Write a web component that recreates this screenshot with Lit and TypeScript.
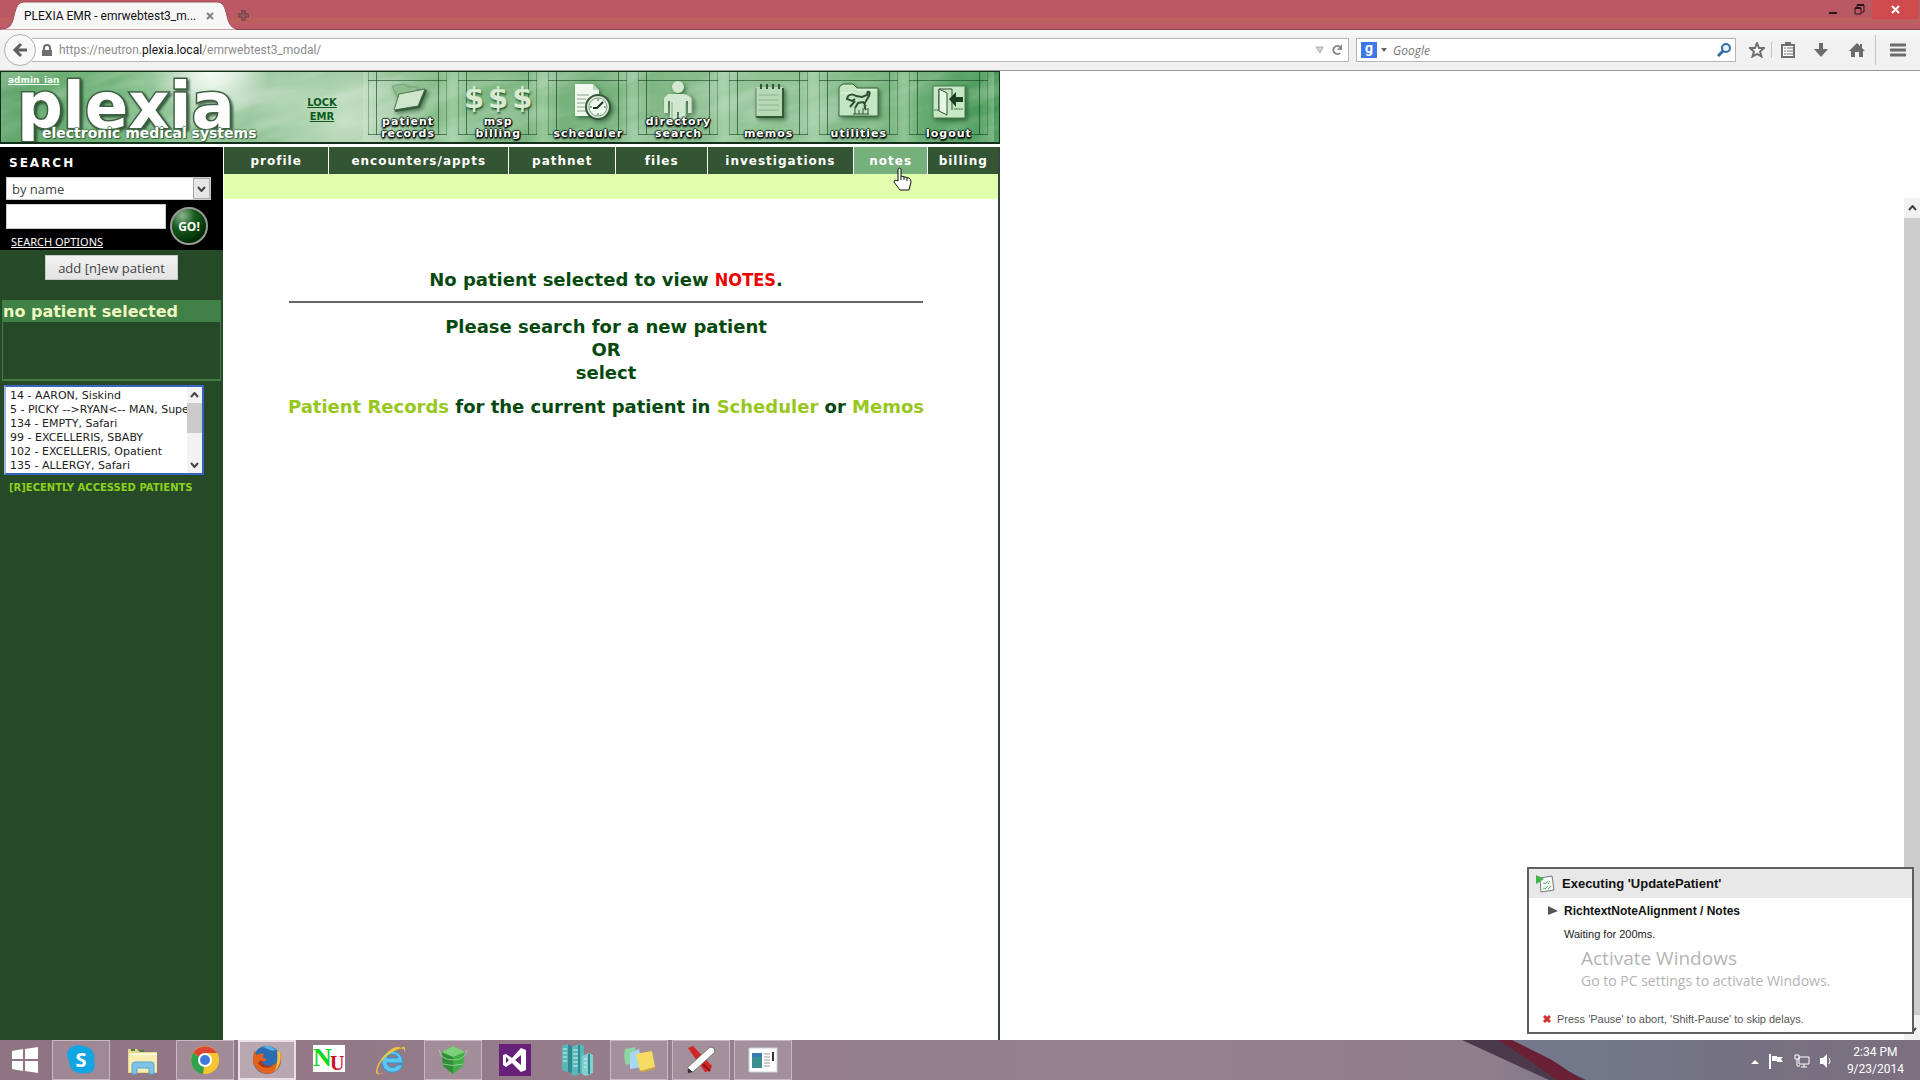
import { LitElement, html, css, svg } from "lit";
import { customElement } from "lit/decorators.js";
import { classMap } from "lit/directives/class-map.js";

const NAV = [
  { label: "profile", grow: 105 },
  { label: "encounters/appts", grow: 180 },
  { label: "pathnet", grow: 107 },
  { label: "files", grow: 91 },
  { label: "investigations", grow: 146 },
  { label: "notes", grow: 74 },
  { label: "billing", grow: 70 },
];

const PATIENTS = [
  "14 - AARON, Siskind",
  "5 - PICKY -->RYAN<-- MAN, Super",
  "134 - EMPTY, Safari",
  "99 - EXCELLERIS, SBABY",
  "102 - EXCELLERIS, Opatient",
  "135 - ALLERGY, Safari",
];

const TOOLS = [
  {
    lines: ["patient", "records"],
    icon: svg`<path d="M8 6l12-2 3 3h10v10H14z" fill="#8fbf8f" stroke="#79a87b"/><path d="M15 14l26-5-7 17-24 4z" fill="#cfe6cd" stroke="#4c7350"/><path d="M11 31l24-4 7-17" fill="none" stroke="#335c38" stroke-width="2"/>`,
  },
  { lines: ["msp", "billing"], dollars: true, icon: svg`` },
  {
    lines: ["scheduler"],
    icon: svg`<path d="M11 4h18l6 6v26H11z" fill="#f1f8f0"/><path d="M29 4v6h6" fill="#bcd6bb"/><path d="M13 15h12M13 19h9M13 23h8M13 27h8M13 31h10" stroke="#8aa58b"/><circle cx="34" cy="27" r="12" fill="#d9ead8" stroke="#36563a" stroke-width="2"/><circle cx="34" cy="27" r="9" fill="#eff7ee" stroke="#7d9c7f"/><path d="M34 19v2M34 33v2M26 27h2M40 27h2" stroke="#36563a"/><path d="M39 22l-6 6h-4" stroke="#1d3320" stroke-width="2" fill="none"/>`,
  },
  {
    lines: ["directory", "search"],
    icon: svg`<circle cx="24" cy="7" r="6" fill="#d3e8d1"/><path d="M14 14h20l4 4v15h-4V21h-2v23h-7V32h-2v12h-7V21h-2v12h-4V18z" fill="#d3e8d1"/><path d="M31 14l3 1 4 3v15M32 22v21M18 22v19" stroke="#7fa781" fill="none"/>`,
  },
  {
    lines: ["memos"],
    icon: svg`<path d="M11 7h27v30H11z" fill="#b7dab5"/><path d="M11 37h27V8" stroke="#2f5a35" stroke-width="2" fill="none"/><path d="M11 37V8" stroke="#5c8a60"/><path d="M14 15h20M14 20h20M14 25h20M14 30h20" stroke="#8db58d"/><path d="M16 4v5M22 4v5M28 4v5M34 4v5" stroke="#315837" stroke-width="2"/>`,
  },
  {
    lines: ["utilities"],
    icon: svg`<path d="M4 36V7l4-3h10l4 4h21v28z" fill="#c5e6c2" stroke="#36653c"/><path d="M6 13h14M22 10h20" stroke="#e6f6e4"/><path d="M13 16q4-3 8 0l6 1 5-2 1-4M13 16l-1 3 5 2 3-2M20 21l-5 6M32 12q4-1 2 4l-3 5q-3 4 0 9M20 28l3-5 5-1 3 4" stroke="#2c5132" stroke-width="2" fill="none"/><path d="M20 28v6M24 30v4M28 28v6M33 28v6M18 34h16" stroke="#2c5132"/>`,
  },
  {
    lines: ["logout"],
    icon: svg`<path d="M8 6h32v32H8z" fill="#c8e8c5" stroke="#477a4c"/><path d="M9 30h6M29 29h9" stroke="#477a4c"/><path d="M14 31V9h13v21" stroke="#2c5132" fill="none"/><path d="M14 9l8 4v22l-8-4z" fill="#e6f6e4" stroke="#2c5132"/><path d="M24 19l7-7v5h7v5h-7v5z" fill="#1f3f25"/>`,
  },
];

const TASKS = [
  {
    name: "Skype", open: true,
    icon: svg`<path d="M9 2c5-2 7 0 9 0 9 1 13 8 11 15 3 7-2 14-9 12C12 31 4 26 4 17 0 10 2 4 9 2z" fill="#12a5e3"/><text x="16" y="23" text-anchor="middle" font-family="Open Sans" font-weight="700" font-size="20" fill="#fff">S</text>`,
  },
  {
    name: "File Explorer",
    icon: svg`<path d="M1 5h9l2 3h18v21H1z" fill="#ead788"/><path d="M2 9h28v19H2z" fill="#f8eeb4"/><path d="M2 9h28v2H2z" fill="#fdf8d8"/><path d="M5 30v-9q0-3 3-3h16q3 0 3 3v9h-5v-6H10v6z" fill="#7fc3e6" stroke="#5aa3cc"/><path d="M4 6h4M13 7h4" stroke="#3f7d4a" stroke-width="2"/>`,
  },
  {
    name: "Chrome", open: true,
    icon: svg`<circle cx="16" cy="16" r="14" fill="#f4c630"/><path d="M16 16L4 9A14 14 0 0 1 28.100 9z" fill="#dd4434"/><path d="M16 16L4 9a14 14 0 0 0 10 21z" fill="#2fa24e"/><path d="M16 9h12a14 14 0 0 1-12 21l6-11z" fill="#f4c630"/><circle cx="16" cy="16" r="7" fill="#fff"/><circle cx="16" cy="16" r="5" fill="#3f79d8"/>`,
  },
  {
    name: "Firefox", active: true,
    icon: svg`<circle cx="16" cy="16" r="14" fill="#2b6cb4"/><path d="M12 3q6-3 13 3-4 1-6 0z" fill="#52b4e4"/><path d="M4 6c-3 6-3 13 1 18s12 8 18 4 9-12 6-20c0 8-4 13-10 14s-9-2-9-5c3 1 5 0 6-2-4 0-5-3-3-5-4-1-6 0-7 1-2-1-2-3-2-5z" fill="#e2631c"/><path d="M29 8c2 8-1 16-6 20 3-5 4-12 3-21z" fill="#f7c33c"/><path d="M10 16c2 6 8 7 12 5-3 4-11 4-15-2z" fill="#a9341a"/>`,
  },
  {
    name: "NU",
    icon: svg`<path d="M0 1h32v27H0z" fill="#fff"/><text x="0" y="22" font-family="Liberation Serif" font-weight="700" font-size="26" fill="#10d820">N</text><text x="17" y="26" font-family="Liberation Serif" font-weight="700" font-size="20" fill="#d01020">U</text>`,
  },
  {
    name: "Internet Explorer",
    icon: svg`<path d="M28 19H12c1 5 8 6 10 2h6c-3 9-19 11-21-2C5 5 27 2 28 19zM12 14h11c-1-5-10-5-11 0z" fill="#5cc5f0" stroke="#2f93cc"/><path d="M26 4c4-3 5 0 3 5 2-8-8-4-16 2S1 26 3 29c1 2 5 0 8-2-8 6-12 4-9-4S18-1 26 4z" fill="#f3c63a"/>`,
  },
  {
    name: "Green Cube", open: true,
    icon: svg`<path d="M5 8L16 2l12 6-2 14-10 8-10-8z" fill="#3fae45"/><path d="M5 8l11 5v17L6 22z" fill="#2f8f38"/><path d="M16 2l12 6-12 5L5 8z" fill="#7fd07a"/><path d="M2 6q2 10 14 10T30 6M6 20q10 3 20 0" stroke="#b9d8bb" stroke-opacity=".7" fill="none"/>`,
  },
  {
    name: "Visual Studio",
    icon: svg`<path d="M0 0h32v32H0z" fill="#68217a"/><path d="M4 11l3-1 6 4 9-10 5 2v20l-5 2-9-9-6 4-3-2zM7 13v6l3-3zM22 11l-6 5 6 5z" fill="#fff" fill-rule="evenodd"/>`,
  },
  {
    name: "Servers",
    icon: svg`<path d="M1 2l6-2v28l-6-2zM10 3l8-3 5 2v26l-9 4-4-2z" fill="#57b7b9"/><path d="M7 0l4 2v27l-4-1z" fill="#2f8a90"/><path d="M21 12l7-3 4 2v18l-7 3-4-2z" fill="#7fd0cf"/><path d="M2 5h4M2 9h4M2 13h4M2 17h4M12 6h5M12 10h5M12 14h5M12 18h5M12 22h5M23 15h3M23 19h3M23 23h3" stroke="#d5f3f1"/><path d="M18 1v28M28 10v20" stroke="#2f8a90" stroke-width="2"/>`,
  },
  {
    name: "Sticky Notes", open: true,
    icon: svg`<path d="M2 5l10-2 3 15-12 3q-3-8-1-16z" fill="#8ed6a0"/><path d="M7 9l9-4 4 18-13 2z" fill="#a9d6f2"/><path d="M13 10l16-3 3 16-15 4z" fill="#f6dc62"/><path d="M17 27l15-4-1 2-11 3z" fill="#d0ab36"/>`,
  },
  {
    name: "Test Tool", open: true,
    icon: svg`<path d="M3 4l5-2 19 20-2 5-5 1z" fill="#d32525"/><path d="M25 3l4 1 1 4L8 28l-5 1-1-5z" fill="#fff" stroke="#777"/><path d="M3 24l5 4-5 1z" fill="#333"/><path d="M18 20l7 7" stroke="#8d1414" stroke-width="2"/>`,
  },
  {
    name: "Window", open: true,
    icon: svg`<path d="M2 4h28v24H2z" fill="#fff" stroke="#c9d5da"/><path d="M5 9h10v15H5z" fill="#3c8f8f"/><path d="M5 9h10v4H5z" fill="#3d79b5"/><path d="M17 10h6M17 13h6M17 16h6M17 19h6M17 22h6" stroke="#999"/><path d="M26 8v9" stroke="#333" stroke-width="2"/>`,
  },
];

@customElement("browser-chrome")
export class BrowserChrome extends LitElement {
  static styles = css`
    :host { display: block; font-family: Roboto, "Open Sans", sans-serif; }
    * { box-sizing: border-box; }
    button { border: 0; padding: 0; margin: 0; background: none; font: inherit; display: grid; place-items: center; }
    .title { display: flex; align-items: flex-start; height: 30px; background: linear-gradient(#ba5964 0, #ba5964 17px, #c25e5e 18px, #b9625f 22px, #c15a68 24px); border-bottom: 1px solid #85444b; }
    .tabbox { position: relative; width: 236px; height: 30px; display: flex; align-items: center; padding: 2px 21px 0 24px; }
    .tabbg { position: absolute; left: 0; top: 0; width: 100%; height: 30px; }
    .tabname { position: relative; flex: 1; font-size: 12px; line-height: 16px; color: #111; white-space: nowrap; }
    .close { position: relative; width: 10px; height: 10px; }
    .plus { width: 14px; height: 30px; }
    .fill { flex: 1; }
    .win { display: flex; padding-right: 2px; }
    .win button { width: 26px; height: 19px; }
    .win .x { width: 46px; background: #cf4a4d; }
    .bar { display: flex; align-items: center; height: 41px; background: linear-gradient(#fafafa, #f1f1f1 10px); border-bottom: 1px solid #999; padding-left: 4px; }
    .back { width: 32px; height: 32px; border-radius: 16px; border: 1px solid #b0b0b0; background: #f8f8f8; z-index: 1; }
    .field { display: flex; align-items: center; height: 24px; background: #fff; border: 1px solid #b5b5b5; color: #8b8b8b; font-size: 12px; }
    .url { flex: 1; margin-left: -4px; padding: 0 5px 0 10px; gap: 7px; border-left: 0; }
    .url b { font-weight: 400; color: #111; }
    .search { width: 380px; margin: 0 11px 0 7px; padding: 0 4px; gap: 4px; }
    .search input { flex: 1; min-width: 0; border: 0; outline: 0; font: italic 12px "Open Sans", sans-serif; background: none; }
    .search input::placeholder { color: #777; opacity: 1; }
    .g { width: 16px; height: 16px; background: #3d78e8; color: #fff; font-size: 14px; line-height: 13px; font-weight: 700; text-align: center; }
    .tools { display: flex; align-items: center; }
    .tools button { width: 36px; height: 24px; }
    .tools button:first-child { width: 20px; margin-right: 4px; }
    .tools .tight { width: 31px; }
    .sep { width: 1px; height: 30px; background: #c4c4c4; }
    .sep.small { height: 16px; }
    .tools .menu { width: 44px; }
    svg { display: block; }
  `;
  render() {
    return html`
      <div class="title">
        <div class="tabbox">
          <svg class="tabbg" viewBox="0 0 236 30" preserveAspectRatio="none" aria-hidden="true"><path d="M0 30v-1c10 0 12-4 14-13S18 2 24 2h193c6 0 8 5 10 14s5 13 12 13v1z" fill="#f7f7f7" stroke="#a34e57"/></svg>
          <span class="tabname">PLEXIA EMR - emrwebtest3_m...</span>
          <button class="close" aria-label="Close tab"><svg width="8" height="8" viewBox="0 0 8 8"><path d="M1 1l6 6M7 1L1 7" stroke="#808080" stroke-width="2"/></svg></button>
        </div>
        <button class="plus" aria-label="New tab"><svg width="11" height="11" viewBox="0 0 11 11"><path d="M4 0h3v4h4v3H7v4H4V7H0V4h4z" fill="#8f5a60" stroke="#6f3b40"/></svg></button>
        <div class="fill"></div>
        <div class="win">
          <button aria-label="Minimize"><svg width="10" height="10" viewBox="0 0 10 10"><path d="M1 8h8" stroke="#2a1517" stroke-width="2"/></svg></button>
          <button aria-label="Restore"><svg width="11" height="11" viewBox="0 0 11 11"><path d="M3 3V1h7v7H8M1 4h6v6H1z" fill="none" stroke="#2a1517"/><path d="M3 1h7M1 4h6" stroke="#2a1517" stroke-width="2"/></svg></button>
          <button class="x" aria-label="Close"><svg width="9" height="9" viewBox="0 0 9 9"><path d="M1 1l7 7M8 1L1 8" stroke="#fff" stroke-width="2"/></svg></button>
        </div>
      </div>
      <div class="bar">
        <button class="back" aria-label="Back"><svg width="16" height="16" viewBox="0 0 16 16"><path d="M15 8H4M9 2L3 8l6 6" fill="none" stroke="#606060" stroke-width="3"/></svg></button>
        <div class="field url">
          <svg width="10" height="13" viewBox="0 0 10 13"><path d="M2 6V4a3 3 0 0 1 6 0v2" fill="none" stroke="#6f6f6f" stroke-width="2"/><path d="M0 6h10v6H0z" fill="#6f6f6f"/></svg>
          <span>https://neutron.<b>plexia.local</b>/emrwebtest3_modal/</span>
          <span class="fill"></span>
          <svg width="9" height="8" viewBox="0 0 9 8"><path d="M1 1h7L5 7z" fill="#d5d5d5" stroke="#aaa"/></svg>
          <button aria-label="Reload"><svg width="12" height="12" viewBox="0 0 12 12"><path d="M9 9a4 4 0 1 1 0-6" fill="none" stroke="#8a8a8a" stroke-width="2"/><path d="M11 0v6H6z" fill="#8a8a8a"/></svg></button>
        </div>
        <div class="field search">
          <span class="g">g</span>
          <svg width="6" height="4" viewBox="0 0 6 4"><path d="M0 0h6L3 4z" fill="#666"/></svg>
          <input aria-label="Search with Google" placeholder="Google" />
          <button aria-label="Search"><svg width="14" height="14" viewBox="0 0 14 14"><circle cx="9" cy="5" r="4" fill="#e9f3fb" stroke="#316ca5" stroke-width="2"/><path d="M6 8l-5 5" stroke="#316ca5" stroke-width="3"/></svg></button>
        </div>
        <div class="tools">
          <button aria-label="Bookmark"><svg width="16" height="16" viewBox="0 0 16 16"><path d="M8 1l2 5h5l-4 3.500 1.500 5L8 12l-4.500 2.500L5 9.500 1 6h5z" fill="#fff" stroke="#6f6f6f" stroke-width="2"/></svg></button>
          <span class="sep small"></span>
          <button class="tight" aria-label="Bookmarks list"><svg width="14" height="16" viewBox="0 0 14 16"><path d="M1 3h12v12H1z" fill="#fff" stroke="#6f6f6f" stroke-width="2"/><path d="M4 0h6v3H4z" fill="#6f6f6f"/><path d="M3 6h2M3 9h2M3 12h2M6 6h6M6 9h6M6 12h6" stroke="#6f6f6f"/></svg></button>
          <button aria-label="Downloads"><svg width="14" height="14" viewBox="0 0 14 14"><path d="M5 0h4v6h5l-7 8-7-8h5z" fill="#6b6b6b"/></svg></button>
          <button aria-label="Home"><svg width="16" height="14" viewBox="0 0 16 14"><path d="M8 0l3 3V1h2v4l3 3h-2v6h-4V9H6v5H2V8H0z" fill="#6b6b6b"/></svg></button>
          <span class="sep"></span>
          <button class="menu" aria-label="Menu"><svg width="16" height="14" viewBox="0 0 16 14"><path d="M1 2h14M1 7h14M1 12h14" stroke="#6b6b6b" stroke-width="3" stroke-linecap="round"/></svg></button>
        </div>
      </div>`;
  }
}

@customElement("plexia-banner")
export class PlexiaBanner extends LitElement {
  static styles = css`
    :host { display: block; font-family: "DejaVu Sans", Verdana, sans-serif; }
    * { box-sizing: border-box; }
    .banner { position: relative; display: flex; height: 73px; border: 1px solid #12301a; border-bottom-width: 2px; overflow: hidden;
      background:
        radial-gradient(ellipse 60px 45px at 21% 0, rgba(255,255,255,.9), rgba(255,255,255,0)),
        radial-gradient(ellipse 110px 80px at 22% 20%, rgba(226,244,226,.6), rgba(226,244,226,0)),
        radial-gradient(ellipse 90px 80px at 34% 70%, rgba(215,236,213,.7), rgba(205,230,203,0)),
        linear-gradient(90deg, #62a56b 0, #74b57c 12%, #7db582 25%, #98c49a 36%, #82ba86 45%, #74b07a 60%, #94c497 75%, #7db883 88%, #3f9450 100%); }
    .marble { position: absolute; left: 0; top: 0; width: 100%; height: 100%; opacity: .2; }
    .brand { position: relative; width: 280px; }
    .user { position: absolute; left: 7px; top: 3px; font-size: 9px; line-height: 11px; font-weight: 700; color: #f3fff2; }
    .word { position: absolute; left: 16px; top: 6px; font-size: 64px; line-height: 56px; font-weight: 700; color: #fff; -webkit-text-stroke: 3px #3f5f44; paint-order: stroke fill; filter: drop-shadow(2px 2px 1px rgba(20,50,26,.7)); }
    .tagline { position: absolute; left: 41px; top: 53px; font-size: 14px; line-height: 16px; font-weight: 700; color: #fff; white-space: nowrap; text-shadow: 1px 1px 1px #2f5a36, -1px 0 1px #5c8a60, 1px 0 1px #5c8a60, 0 -1px 1px #5c8a60; }
    .lock { position: relative; width: 82px; padding-top: 24px; text-align: center; font-size: 10px; line-height: 14px; font-weight: 700; }
    .lock a { color: #0c5a1c; }
    .tools { position: relative; flex: 1; display: grid; grid-template-columns: repeat(7, 1fr); padding-right: 5px; }
    .tool { position: relative; display: flex; flex-direction: column; align-items: center; justify-content: flex-end; padding: 0 0 2px; text-decoration: none; color: #fff;
      background: linear-gradient(90deg, rgba(215,240,214,.3) 0, transparent 18px, transparent 74px, rgba(215,240,214,.3)); }
    .frame { position: absolute; left: 5px; right: 6px; top: 0; bottom: 7px; border: solid rgba(24,72,34,.35); border-width: 0 1px; }
    .frame.in { left: 13px; right: 14px; border-color: rgba(14,52,22,.6); }
    .frame.row { top: 8px; border-width: 1px 0; border-color: rgba(14,52,22,.55); }
    .pic { position: absolute; left: 50%; top: 8px; margin-left: -24px; filter: drop-shadow(2px 2px 2px rgba(20,60,28,.6)); }
    .money { position: absolute; left: 0; right: 0; top: 8px; text-align: center; font-size: 29px; line-height: 36px; letter-spacing: 4px; padding-left: 4px; font-weight: 700; color: #d8ebd0; text-shadow: 1px 2px 2px #2d6237; }
    .label { position: relative; font-size: 11px; line-height: 12px; font-weight: 700; letter-spacing: 1px; text-align: center;
      text-shadow: 1px 1px 1px #000, -1px 0 1px #12301a, 0 -1px 1px #12301a, 1px 0 1px #000, 0 2px 2px #000; }
    .label span { display: block; }
  `;
  render() {
    return html`<header class="banner">
      <svg class="marble" aria-hidden="true"><filter id="m"><feTurbulence type="fractalNoise" baseFrequency="0.012 0.05" numOctaves="3" seed="4"/><feColorMatrix values="0 0 0 0 1  0 0 0 0 1  0 0 0 0 1  3 0 0 0 -1.200"/></filter><rect width="1400" height="400" y="-20" filter="url(#m)" transform="rotate(-14)"/></svg>
      <div class="brand">
        <span class="word">plexia</span>
        <span class="tagline">electronic medical systems</span>
        <a class="user" href="#">admin_ian</a>
      </div>
      <div class="lock"><a href="#">LOCK<br />EMR</a></div>
      <nav class="tools">
        ${TOOLS.map((t) => html`<a class="tool" href="#">
          <i class="frame"></i><i class="frame in"></i><i class="frame row"></i>
          ${t.dollars ? html`<span class="money">$$$</span>` : html`<svg class="pic" width="48" height="46" viewBox="0 0 48 46" aria-hidden="true">${t.icon}</svg>`}
          <span class="label">${t.lines.map((l) => html`<span>${l}</span>`)}</span>
        </a>`)}
      </nav>
    </header>`;
  }
}

@customElement("search-panel")
export class SearchPanel extends LitElement {
  static styles = css`
    :host { display: block; background: #264a27; font-family: "DejaVu Sans", Verdana, sans-serif; }
    * { box-sizing: border-box; }
    .search { background: #000; height: 103px; padding: 9px 6px 0; color: #fff; display: grid; grid-template-columns: 160px 40px; column-gap: 4px; align-content: start; }
    h2 { margin: 0 0 6px 3px; font-size: 12px; line-height: 15px; letter-spacing: 2px; grid-column: 1 / 3; }
    .pick { position: relative; grid-column: 1 / 3; width: 205px; height: 23px; margin-bottom: 4px; }
    .pick select { appearance: none; width: 100%; height: 100%; border: 1px solid #ccc; border-radius: 0; background: #fff; padding: 0 5px; margin: 0; color: #444; font: 13px "Open Sans", sans-serif; }
    .drop { position: absolute; right: 1px; top: 1px; width: 17px; height: 21px; background: #e6e6e6; border: 1px solid #aaa; display: grid; place-items: center; pointer-events: none; }
    .q { width: 160px; height: 25px; border: 1px solid #ccc; padding: 0 4px; background: #fff; }
    .go { grid-row: 3 / 5; grid-column: 2; width: 38px; height: 38px; margin-top: 3px; border: 2px solid #9a9a9a; border-radius: 19px; padding: 0; color: #fff; font: 700 12px "Open Sans", sans-serif; background: radial-gradient(circle at 30% 20%, #8fb58f 0, #175c1d 35%, #022c06 75%); }
    .opt { align-self: start; margin: 5px 0 0 5px; color: #fff; font: 11px/16px "Noto Sans", sans-serif; }
    .add { display: block; margin: 5px 0 20px 45px; width: 133px; height: 25px; border: 1px solid #c9c9c9; border-radius: 0; background: linear-gradient(#f2f2f2, #e3e3e3); color: #444; font: 13px "Open Sans", sans-serif; padding: 0; }
    .patient { margin: 0 2px 4px; height: 81px; border: 1px solid #407e47; border-bottom-width: 2px; }
    .patient h3 { margin: 0; background: #3f8146; color: #f1f7c0; font-size: 16px; line-height: 21px; white-space: nowrap; }
    .list { position: relative; margin-left: 4px; width: 200px; height: 90px; display: flex; border: 2px solid #2f5fb4; border-color: #3565c0 #3565c0 #3565c0 #9bb4e0; background: #fff; }
    .list select { flex: 1; min-width: 0; border: 0; outline: 0; margin: 0; padding: 2px 0 0 2px; overflow: hidden; background: #fff; font: 11px "DejaVu Sans", sans-serif; color: #222; scrollbar-width: none; }
    .list option { height: 14px; min-height: 14px; line-height: 14px; padding: 0 0 0 2px; font-size: 11px; overflow: hidden; }
    .sb { width: 15px; background: #f2f2f2; display: flex; flex-direction: column; align-items: center; padding: 5px 0; }
    .thumb { width: 100%; height: 30px; margin-top: 5px; background: #cbcbcb; }
    .end { margin-top: auto; }
    .recent { display: block; margin: 6px 0 0 9px; font-size: 10px; line-height: 14px; font-weight: 700; color: #8dd11e; white-space: nowrap; }
    svg { display: block; }
  `;
  render() {
    return html`
      <section class="search">
        <h2>SEARCH</h2>
        <div class="pick">
          <select aria-label="Search by"><option>by name</option></select>
          <span class="drop"><svg width="9" height="6" viewBox="0 0 9 6"><path d="M1 1l3.500 4L8 1" fill="none" stroke="#444" stroke-width="2"/></svg></span>
        </div>
        <input class="q" aria-label="Patient search" />
        <button class="go">GO!</button>
        <a class="opt" href="#">SEARCH OPTIONS</a>
      </section>
      <button class="add">add [n]ew patient</button>
      <section class="patient"><h3>no patient selected</h3></section>
      <div class="list">
        <select size="6" id="recent">${PATIENTS.map((p) => html`<option>${p}</option>`)}</select>
        <div class="sb" aria-hidden="true">
          <svg width="9" height="6" viewBox="0 0 9 6"><path d="M1 5l3.500-4L8 5" fill="none" stroke="#444" stroke-width="2"/></svg>
          <span class="thumb"></span>
          <svg class="end" width="9" height="6" viewBox="0 0 9 6"><path d="M1 1l3.500 4L8 1" fill="none" stroke="#444" stroke-width="2"/></svg>
        </div>
      </div>
      <label class="recent" for="recent">[R]ECENTLY ACCESSED PATIENTS</label>`;
  }
}

@customElement("run-toast")
export class RunToast extends LitElement {
  static styles = css`
    :host { display: block; width: 387px; border: 2px solid #606060; background: #fff; font-family: "Liberation Sans", Arial, sans-serif; }
    * { box-sizing: border-box; }
    .head { display: flex; align-items: center; gap: 7px; height: 29px; background: #e8e8e8; padding-left: 7px; font-size: 13px; font-weight: 700; color: #111; }
    .body { padding: 4px 0 0 19px; }
    .row { display: flex; align-items: center; gap: 6px; font-size: 12px; line-height: 18px; font-weight: 700; color: #111; white-space: nowrap; }
    .wait { padding: 5px 0 0 16px; font-size: 11px; line-height: 18px; color: #222; }
    .mark { padding: 2px 0 0 33px; color: #b4b4b4; font-family: "Open Sans", sans-serif; }
    .big { font-size: 19px; line-height: 26px; }
    .small { font-size: 14px; line-height: 20px; }
    .foot { display: flex; align-items: center; gap: 6px; padding: 21px 0 6px 14px; font-size: 11px; line-height: 14px; color: #555; }
    p { margin: 0; }
  `;
  render() {
    return html`
      <div class="head"><svg width="19" height="18" viewBox="0 0 19 18"><path d="M4 3l12-2 2 14-13 2z" fill="#f8fbf7" stroke="#777"/><path d="M0 0l8 4-8 5z" fill="#3db54a"/><path d="M7 8l2 1 3-3M12 9l2-3M7 13l2 1 3-3M12 14l3-3" stroke="#59b863" fill="none"/></svg><span>Executing 'UpdatePatient'</span></div>
      <div class="body">
        <div class="row"><svg width="10" height="10" viewBox="0 0 10 10"><path d="M0 0l10 5-10 4z" fill="#555"/></svg><span>RichtextNoteAlignment / Notes</span></div>
        <p class="wait">Waiting for 200ms.</p>
        <div class="mark"><p class="big">Activate Windows</p><p class="small">Go to PC settings to activate Windows.</p></div>
      </div>
      <div class="foot"><svg width="8" height="8" viewBox="0 0 8 8"><path d="M1 1l6 6M7 1L1 7" stroke="#d2302c" stroke-width="3"/></svg><span>Press 'Pause' to abort, 'Shift-Pause' to skip delays.</span></div>`;
  }
}

@customElement("task-bar")
export class TaskBar extends LitElement {
  static styles = css`
    :host { display: block; font-family: Roboto, "Open Sans", sans-serif; }
    * { box-sizing: border-box; }
    .bar { position: relative; display: flex; align-items: stretch; height: 40px; overflow: hidden;
      background: linear-gradient(90deg, #8f7482 0, #967d8a 30%, #96808d 60%, #8f7d8c 78%, #73788a 83%, #747180 90%, #7c6f80 100%); }
    .streak { position: absolute; left: 76%; top: 0; width: 230px; height: 40px; }
    button { border: 0; padding: 0; margin: 0; background: none; display: grid; place-items: center; }
    .start { width: 50px; }
    .apps { display: flex; gap: 4px; padding-left: 2px; }
    .app { width: 58px; height: 40px; border: 1px solid transparent; }
    .open { border-color: #c6b7c0; background: rgba(255,255,255,.14); }
    .active { border: 2px solid #e9dfe5; background: rgba(255,255,255,.35); }
    .fill { flex: 1; }
    .tray { position: relative; display: flex; align-items: center; gap: 10px; padding: 2px 16px 0 0; color: #fff; }
    .clock { margin-left: 4px; text-align: center; font-size: 12px; line-height: 17px; }
    svg { display: block; }
  `;
  render() {
    return html`<footer class="bar">
      <svg class="streak" viewBox="0 0 230 40" aria-hidden="true"><defs><linearGradient id="sky"><stop offset="0" stop-color="#73788a"/><stop offset=".4" stop-color="#73788a"/><stop offset="1" stop-color="#73788a" stop-opacity="0"/></linearGradient></defs><path d="M46 0h184v40H116z" fill="url(#sky)"/><path d="M3 0h42l82 40H90z" fill="#4b3a4b"/><path d="M39 0h14l40 20 30 20h-25L70 20z" fill="#6a2136"/></svg>
      <button class="start" aria-label="Start"><svg width="28" height="26" viewBox="0 0 28 26"><path d="M1 4l11-2v10H1zM14 2l13-2v12H14zM1 14h11v10L1 22zM14 14h13v12l-13-2z" fill="#fff"/></svg></button>
      <div class="apps">${TASKS.map((t) => html`<button class=${classMap({ app: true, open: !!t.open, active: !!t.active })} aria-label=${t.name}><svg width="32" height="32" viewBox="0 0 32 32">${t.icon}</svg></button>`)}</div>
      <div class="fill"></div>
      <div class="tray">
        <svg width="8" height="5" viewBox="0 0 8 5"><path d="M0 5l4-4 4 4z" fill="#fff"/></svg>
        <svg width="15" height="15" viewBox="0 0 15 15"><path d="M1 0v15" stroke="#fff" stroke-width="2"/><path d="M3 2h5v1h6l-2 2 2 3H8V7H3z" fill="#fff"/></svg>
        <svg width="16" height="15" viewBox="0 0 16 15"><path d="M5 3h10v7H5zM7 13h6M10 10v3M1 1h4v4H1zM3 5v7h3" fill="none" stroke="#fff"/></svg>
        <svg width="13" height="14" viewBox="0 0 13 14"><path d="M0 4h3l4-4v14l-4-4H0z" fill="#fff"/><path d="M9 4q2 3 0 6" stroke="#fff" fill="none"/></svg>
        <div class="clock"><div>2:34 PM</div><div>9/23/2014</div></div>
      </div>
    </footer>`;
  }
}

@customElement("app-root")
export class AppRoot extends LitElement {
  static styles = css`
    :host { display: flex; flex-direction: column; min-height: 100vh; background: #fff; font-family: "DejaVu Sans", Verdana, sans-serif; }
    * { box-sizing: border-box; }
    .page { position: relative; flex: 1; display: grid; grid-template-columns: 25fr 23fr; }
    .emr { display: flex; flex-direction: column; }
    .banner { border-bottom: 3px solid #fff; }
    .work { flex: 1; display: grid; grid-template-columns: 223px 1fr; }
    .frame { margin-left: 1px; border-right: 2px solid #33483a; }
    .nav { display: flex; gap: 1px; height: 27px; }
    .nav a { display: grid; place-items: center; min-width: 0; background: #335533; color: #fff; text-decoration: none; font-size: 12px; line-height: 14px; font-weight: 700; letter-spacing: 1px; }
    .nav .on { background: #76b07b; }
    .strip { height: 25px; background: #e2ffb0; }
    .message { padding: 69px 10px 0 0; text-align: center; font-size: 18px; line-height: 23px; font-weight: 700; color: #06490e; }
    .message p { margin: 0; }
    .message hr { width: 83%; margin: 10px auto 12px; border: 0; border-top: 2px solid #666; }
    .red { color: #f00000; font-weight: 700; font-family: "DejaVu Sans Condensed", "DejaVu Sans", sans-serif; }
    .last { padding-top: 11px; white-space: nowrap; }
    .last a { color: #97c71c; text-decoration: none; }
    .side { display: flex; justify-content: flex-end; padding-top: 127px; }
    .sb { width: 16px; background: #f1f1f1; display: flex; flex-direction: column; align-items: center; padding: 7px 0; }
    .thumb { width: 100%; flex: 1; margin: 7px 0 12px; background: #cdcdcd; }
    .toast { position: absolute; right: 6px; bottom: 6px; }
    .cursor { position: absolute; left: 892px; top: 96px; }
    svg { display: block; }
  `;
  render() {
    return html`
      <browser-chrome></browser-chrome>
      <main class="page">
        <div class="emr">
          <plexia-banner class="banner"></plexia-banner>
          <div class="work">
            <search-panel></search-panel>
            <div class="frame">
              <nav class="nav">${NAV.map((n) => html`<a href="#" class=${classMap({ on: n.label === "notes" })} style="flex: ${n.grow} 1 0">${n.label}</a>`)}</nav>
              <div class="strip"></div>
              <div class="message">
                <p>No patient selected to view <span class="red">NOTES</span>.</p>
                <hr />
                <p>Please search for a new patient<br />OR<br />select</p>
                <p class="last"><a href="#">Patient Records</a> for the current patient in <a href="#">Scheduler</a> or <a href="#">Memos</a></p>
              </div>
            </div>
          </div>
        </div>
        <div class="side">
          <div class="sb" aria-hidden="true">
            <svg width="9" height="6" viewBox="0 0 9 6"><path d="M1 5l3.500-4L8 5" fill="none" stroke="#444" stroke-width="2"/></svg>
            <span class="thumb"></span>
            <svg width="9" height="6" viewBox="0 0 9 6"><path d="M1 1l3.500 4L8 1" fill="none" stroke="#444" stroke-width="2"/></svg>
          </div>
        </div>
        <run-toast class="toast"></run-toast>
        <svg class="cursor" width="20" height="25" viewBox="0 0 20 25" aria-hidden="true"><path d="M6 2q2-2 3 0v7l8 2q2 1 2 4l-2 8H8L2 15q0-3 4-1z" fill="#fff" stroke="#111"/><path d="M9 9v4M12 10v3M15 11v3" stroke="#111"/></svg>
      </main>
      <task-bar></task-bar>`;
  }
}
